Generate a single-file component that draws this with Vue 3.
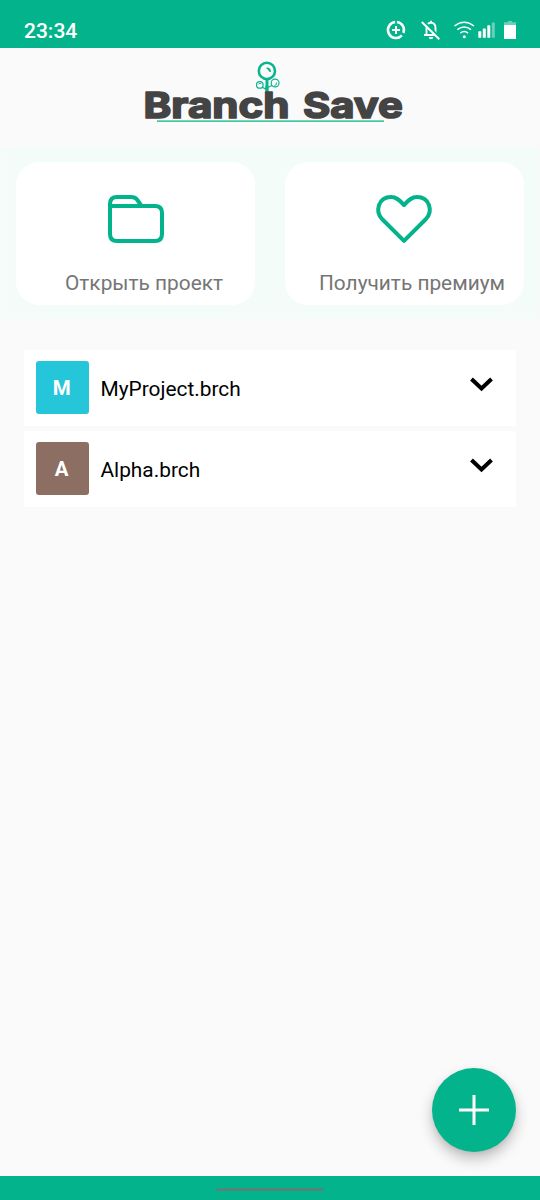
<script setup>
const actions = [
  { label: 'Открыть проект', icon: 'folder' },
  { label: 'Получить премиум', icon: 'heart' },
]
const projects = [
  { name: 'MyProject.brch', initial: 'M', tone: 'cyan' },
  { name: 'Alpha.brch', initial: 'A', tone: 'brown' },
]
</script>

<template>
  <div class="screen">
    <header class="status">
      <span class="clock">23:34</span>
      <svg class="status-icons" width="140" height="24" viewBox="0 0 140 24" fill="none">
        <g stroke="#fff">
          <path d="M15.200 4.060A8 8 0 1 0 21.900 17.400" stroke-width="2.500" />
          <path d="M17 4.060A8 8 0 0 1 23.400 15" stroke-width="2.500" />
          <path d="M16 8v8M12 12h8" stroke-width="2" />
          <path d="M46.500 17V10q0-5 4.500-5.500q4.500.5 4.500 5.500V17M44 17h14M51 2.800v2" stroke-width="1.900" />
          <path d="M43 3.500L60 20.500" stroke="#03b38b" stroke-width="3.500" />
          <path d="M41.800 4L59.300 21.300" stroke-width="2" />
          <path d="M74.500 8Q84.200 .7 93.900 8M77.400 11.600Q84.200 6.500 91 11.600M80.300 15.100Q84.200 12.100 88.100 15.100" stroke-width="1.500" />
        </g>
        <g fill="#fff">
          <path d="M48.800 19h4.400a2.200 2.200 0 0 1-4.400 0z" />
          <circle cx="84.300" cy="18.800" r="1.500" />
          <rect x="98.300" y="13.300" width="3" height="6.500" rx=".6" />
          <rect x="102.800" y="10.600" width="3" height="9.200" rx=".6" />
          <rect x="107.300" y="7.300" width="3" height="12.500" rx=".6" />
          <rect x="111.800" y="4.500" width="3" height="15.300" rx=".6" opacity=".4" />
          <path d="M124 4.200h4V3h4v1.200h4V7h-12z" opacity=".4" />
          <rect x="124" y="7" width="12" height="14" />
        </g>
      </svg>
    </header>

    <div class="brand">
      <svg width="540" height="99" viewBox="0 48 540 99">
        <g fill="none" stroke="#08b58d">
          <circle cx="266.900" cy="70.900" r="8.100" stroke-width="2.600" />
          <path d="M267 79v14" stroke-width="3" />
          <circle cx="259.800" cy="84.900" r="3.300" stroke-width="1.200" />
          <circle cx="275.100" cy="83" r="3.900" stroke-width="1.200" />
          <path d="M262.300 87.200l4 2.200M267.500 87.500l4.500-2" stroke-width="1.200" />
          <path d="M258.500 84q1.500-1.400 2.800 0M274.500 85.500q2.500-.5 2-3" stroke-width="1" />
        </g>
        <path d="M266.500 67.200q4.500.5 4.400 4.200q-1.500 1.500-2.200-.7q-.7-1.500-2-1.800z" fill="#08b58d" />
        <g class="wordmark">
          <text x="143.500" y="117.500" textLength="146" lengthAdjust="spacingAndGlyphs">Branch</text>
          <text x="303" y="117.500" textLength="100" lengthAdjust="spacingAndGlyphs">Save</text>
        </g>
        <path d="M266.900 86v4.800" stroke="#08b58d" stroke-width="3" />
        <rect x="157" y="120.300" width="227" height="1.700" fill="#43c79f" />
      </svg>
    </div>

    <section class="actions">
      <div v-for="a in actions" :key="a.icon" class="action">
        <svg :class="['action-icon', a.icon]" width="60" height="52" viewBox="0 0 60 52">
          <path v-if="a.icon === 'folder'" d="M4 13V11Q4 4 11 4H25Q29 4 31 6.500L33.500 10Q35 13 37 13H49Q56 13 56 20V41Q56 48 49 48H11Q4 48 4 41V13H37" />
          <path v-else d="M30 47.800L8 26C1 18.500 4 4 17 4C23 4 26 8 30 12C34 8 37 4 43 4C56 4 59 18.500 52 26Z" />
        </svg>
        <span :class="['action-label', a.icon]">{{ a.label }}</span>
      </div>
    </section>

    <main class="projects">
      <div v-for="p in projects" :key="p.name" class="project">
        <span :class="['avatar', p.tone]">{{ p.initial }}</span>
        <span class="name">{{ p.name }}</span>
        <svg class="chevron" width="24" height="16" viewBox="0 0 24 16">
          <path d="M1.500 3L11.500 12.500L21.500 3" fill="none" stroke="#000" stroke-width="4" />
        </svg>
      </div>
    </main>

    <button class="fab" aria-label="+">
      <svg width="30" height="30" viewBox="0 0 30 30"><path d="M15 0v30M0 15h30" stroke="#fff" stroke-width="3" /></svg>
    </button>
    <footer class="navbar"><span class="handle"></span></footer>
  </div>
</template>

<style>
body { margin: 0; background: #fafafa; }
</style>

<style scoped>
.screen {
  position: relative;
  display: flex;
  flex-direction: column;
  width: 540px;
  height: 1200px;
  overflow: hidden;
  background: #fafafa;
  font-family: Roboto, "Liberation Sans", sans-serif;
}
.status {
  display: flex;
  justify-content: space-between;
  box-sizing: border-box;
  height: 48px;
  padding: 18px 20px 0 24px;
  background: #03b38b;
  color: #fff;
}
.clock { font-size: 21px; line-height: 26px; font-weight: 500; }
.brand { height: 99px; }
.brand svg { display: block; }
.wordmark {
  font-family: Inter, Roboto, sans-serif;
  font-size: 36px;
  font-weight: 700;
  fill: #444;
  stroke: #444;
  stroke-width: 1.7px;
  stroke-linejoin: round;
}
.actions {
  display: flex;
  gap: 30px;
  box-sizing: border-box;
  height: 172px;
  margin: 0 1px;
  padding: 15px 15px 14.500px;
  background: #f3fcf9;
}
.action {
  display: flex;
  flex: 1;
  flex-direction: column;
  align-items: center;
  border-radius: 23px;
  background: #fff;
}
.action-icon {
  margin-top: 31px;
  fill: none;
  stroke: #03b38b;
  stroke-width: 4;
  stroke-linejoin: round;
}
.action-icon.heart { margin-right: 1px; }
.action-label {
  align-self: flex-end;
  margin-top: 26px;
  color: #757575;
  font-size: 20.850px;
  line-height: 25px;
  white-space: nowrap;
}
.action-label.folder { margin-right: 32px; }
.action-label.heart { margin-right: 19px; }
.projects {
  display: flex;
  flex-direction: column;
  gap: 5px;
  padding: 31px 24px 0;
}
.project {
  display: flex;
  align-items: center;
  box-sizing: border-box;
  height: 76px;
  padding: 0 22px 0 12px;
  background: #fff;
}
.avatar {
  width: 52.500px;
  height: 52.500px;
  margin-bottom: 1px;
  border-radius: 3px;
  color: #fff;
  font-size: 20.500px;
  font-weight: 700;
  line-height: 54px;
  text-align: center;
  text-indent: -1px;
}
.avatar.cyan { background: #26c6da; }
.avatar.brown { background: #8d6e63; }
.name { flex: 1; margin: 2px 0 0 12px; color: #000; font-size: 20.850px; line-height: 28px; }
.chevron { margin-bottom: 8px; }
.fab {
  position: absolute;
  right: 24px;
  bottom: 48px;
  display: flex;
  align-items: center;
  justify-content: center;
  width: 84px;
  height: 84px;
  padding: 0;
  border: 0;
  border-radius: 50%;
  background: #03b38b;
  box-shadow: 0 7px 14px rgba(0, 0, 0, .24), 0 2px 5px rgba(0, 0, 0, .06);
}
.navbar {
  display: flex;
  justify-content: center;
  box-sizing: border-box;
  height: 24px;
  margin-top: auto;
  padding-top: 12px;
  background: #03b38b;
}
.handle { width: 108px; height: 3px; border-radius: 2px; background: #50877a; }
</style>
